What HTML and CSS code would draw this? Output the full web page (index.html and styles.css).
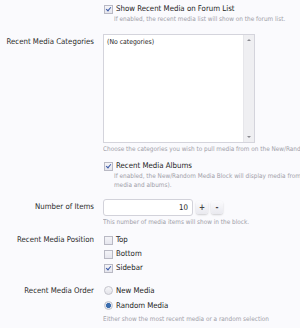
FILE: index.html
```html
<!DOCTYPE html>
<html>
<head>
<meta charset="utf-8">
<link rel="stylesheet" href="styles.css">
</head>
<body>
<div class="form">
  <div class="row r1">
    <div class="label"></div>
    <div class="ctrl">
      <div class="opt"><span class="cb on"></span>Show Recent Media on Forum List</div>
      <div class="hint ind">If enabled, the recent media list will show on the forum list.</div>
    </div>
  </div>

  <div class="row r2">
    <div class="label lab-sel">Recent Media Categories</div>
    <div class="ctrl">
      <div class="select">
        <div class="sel-body">(No categories)</div>
        <div class="sbar"><span class="arr up"></span><span class="arr down"></span></div>
      </div>
      <div class="hint h-sel">Choose the categories you wish to pull media from on the New/Random Media Block.</div>
    </div>
  </div>

  <div class="row r3">
    <div class="label"></div>
    <div class="ctrl">
      <div class="opt"><span class="cb on"></span>Recent Media Albums</div>
      <div class="hint ind">If enabled, the New/Random Media Block will display media from<br>media and albums).</div>
    </div>
  </div>

  <div class="row r4">
    <div class="label lab-num">Number of Items</div>
    <div class="ctrl">
      <div class="numrow">
        <div class="num">10</div>
        <span class="btn">+</span>
        <span class="btn">-</span>
      </div>
      <div class="hint h-num">This number of media items will show in the block.</div>
    </div>
  </div>

  <div class="row r5">
    <div class="label lab-list">Recent Media Position</div>
    <div class="ctrl">
      <div class="opt li"><span class="cb"></span>Top</div>
      <div class="opt li"><span class="cb"></span>Bottom</div>
      <div class="opt li"><span class="cb on"></span>Sidebar</div>
    </div>
  </div>

  <div class="row r6">
    <div class="label lab-radio">Recent Media Order</div>
    <div class="ctrl">
      <div class="opt ri"><span class="rd"></span>New Media</div>
      <div class="opt ri"><span class="rd on"></span>Random Media</div>
      <div class="hint h-rad">Either show the most recent media or a random selection</div>
    </div>
  </div>
</div>
</body>
</html>
```

FILE: styles.css
```css
html, body {
  margin: 0;
  padding: 0;
}
body {
  background: #fafafd;
  width: 300px;
  height: 328px;
  overflow: hidden;
  font-family: "DejaVu Sans Condensed", "DejaVu Sans", Verdana, sans-serif;
  color: #1e1e1e;
  font-size: 7.8px;
}
.form {
  padding-top: 3px;
}
.row {
  display: grid;
  grid-template-columns: 94px 1fr;
  column-gap: 9px;
  white-space: nowrap;
}
.label {
  text-align: right;
  color: #2a2a2a;
  font-size: 7.8px;
  line-height: 12px;
}
.ctrl {
  min-width: 0;
  overflow: hidden;
}
.opt {
  display: flex;
  align-items: center;
  gap: 3px;
  line-height: 12px;
  height: 12px;
  font-size: 7.8px;
  color: #1a1a1a;
  padding-left: 1px;
}
.cb {
  width: 7px;
  height: 7px;
  border: 1px solid #b9b9c4;
  background: linear-gradient(#f4f4f8, #e6e6ee);
  position: relative;
  flex: none;
}
.cb.on::after {
  content: "";
  position: absolute;
  left: 2px;
  top: 0px;
  width: 2px;
  height: 4px;
  border: solid #3b5aa8;
  border-width: 0 1.3px 1.3px 0;
  transform: rotate(40deg);
}
.rd {
  width: 7px;
  height: 7px;
  border: 1px solid #c4c4cc;
  border-radius: 50%;
  background: linear-gradient(#f6f6f9, #e4e4ea);
  flex: none;
  position: relative;
}
.rd.on {
  background: radial-gradient(circle, #3a6cae 0, #3a6cae 2.2px, #dfe4ee 2.8px);
}
.hint {
  font-size: 6.4px;
  line-height: 9px;
  color: #a0a0a8;
}
.ind {
  padding-left: 11px;
}
.lab-sel {
  padding-top: 12px;
}
.select {
  margin-top: 10px;
  width: 150px;
  height: 107px;
  border: 1px solid #d4d4dc;
  background: #fff;
  display: flex;
}
.sel-body {
  flex: 1;
  padding: 2px 3px;
  line-height: 10px;
  font-size: 6.8px;
  color: #222;
}
.sbar {
  width: 10px;
  background: #efeff2;
  border-left: 1px solid #e6e6ea;
  display: flex;
  flex-direction: column;
  justify-content: space-between;
  align-items: center;
  padding: 4px 0;
}
.arr {
  width: 0;
  height: 0;
  border-left: 2px solid transparent;
  border-right: 2px solid transparent;
}
.arr.up {
  border-bottom: 2px solid #8a8a90;
}
.arr.down {
  border-top: 2px solid #8a8a90;
}
.h-sel {
  margin-top: 2px;
}
.r3 {
  margin-top: 6px;
}
.r4 {
  margin-top: 9px;
}
.lab-num {
  padding-top: 2px;
}
.numrow {
  display: flex;
  align-items: center;
  gap: 3px;
}
.num {
  width: 84px;
  height: 15px;
  border: 1px solid #d2d2da;
  border-radius: 3px;
  background: #fff;
  text-align: right;
  padding-right: 4px;
  line-height: 15px;
  font-size: 7.8px;
  color: #222;
}
.btn {
  width: 12px;
  height: 13px;
  border-radius: 3px;
  background: linear-gradient(#fbfbfd, #e9e9ef);
  box-shadow: 0 1px 2px rgba(0,0,0,0.18);
  text-align: center;
  line-height: 13px;
  font-size: 8px;
  font-weight: bold;
  color: #444;
}
.h-num {
  margin-top: 2px;
}
.r5 {
  margin-top: 6px;
}
.lab-list {
  line-height: 14px;
}
.li {
  height: 14px;
  line-height: 14px;
}
.r6 {
  margin-top: 8px;
}
.lab-radio {
  line-height: 15px;
}
.ri {
  height: 15px;
  line-height: 15px;
}
.h-rad {
  margin-top: 2px;
}
```
